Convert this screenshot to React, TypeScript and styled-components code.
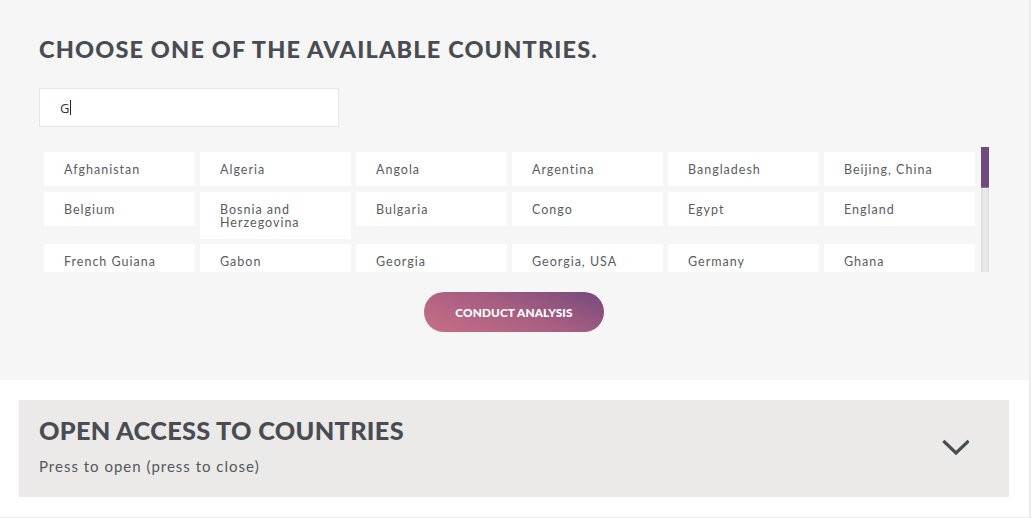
import React from "react";
import styled, { createGlobalStyle } from "styled-components";

const GlobalStyle = createGlobalStyle`
  html, body { margin: 0; padding: 0; }
  body {
    background: #ececec;
    font-family: "Lato", "Noto Sans", sans-serif;
    width: 1031px;
    height: 518px;
    overflow: hidden;
  }
`;

const Page = styled.div`
  width: 1029px;
  height: 517px;
  background: #ffffff;
  display: flex;
  flex-direction: column;
`;

const ChooseSection = styled.section`
  background: #f6f6f6;
  height: 380px;
  box-sizing: border-box;
  padding: 36px 40px 0 39px;
  display: flex;
  flex-direction: column;
`;

const Heading = styled.h1`
  margin: 0;
  font-family: "Lato", sans-serif;
  font-weight: 900;
  font-size: 23.5px;
  line-height: 26px;
  letter-spacing: 1.15px;
  color: #4a4c53;
  text-transform: uppercase;
`;

const SearchBox = styled.div`
  margin-top: 26px;
  width: 300px;
  height: 39px;
  box-sizing: border-box;
  background: #ffffff;
  border: 1px solid #e6e6e6;
  padding: 0 20px;
  display: flex;
  align-items: center;
  font-family: "Open Sans", sans-serif;
  font-size: 13px;
  color: #333;
`;

const Caret = styled.span`
  display: inline-block;
  width: 1px;
  height: 15px;
  background: #222;
  margin-left: 1px;
`;

const ListFrame = styled.div`
  margin-top: 20px;
  width: 950px;
  height: 125px;
  box-sizing: border-box;
  padding: 5px 0 0 5px;
  display: flex;
  gap: 6px;
  overflow: hidden;
`;

const CountryGrid = styled.div`
  display: grid;
  grid-template-columns: repeat(6, 151px);
  column-gap: 5px;
  row-gap: 5.5px;
  align-items: start;
  align-content: start;
`;

const CountryCell = styled.div`
  background: #ffffff;
  padding: 11px 12px 10px 20px;
  font-family: "Lato", sans-serif;
  font-size: 12.5px;
  line-height: 13px;
  letter-spacing: 1px;
  color: #5a5c62;
`;

const ScrollTrack = styled.div`
  width: 8px;
  height: 125px;
  margin-top: -5px;
  background: linear-gradient(to right, #dedede, #ececec 50%, #dedede);
  display: flex;
  flex-direction: column;
  flex-shrink: 0;
`;

const ScrollThumb = styled.div`
  height: 40px;
  background: #6f4a7f;
  border-bottom: 1px solid #8a7a96;
`;

const ButtonRow = styled.div`
  margin-top: 20px;
  display: flex;
  justify-content: center;
  width: 950px;
`;

const AnalysisButton = styled.button`
  width: 180px;
  height: 40px;
  border: none;
  border-radius: 20px;
  background: linear-gradient(20deg, #c86e86 0%, #a95f82 50%, #744a7c 100%);
  color: #ffffff;
  font-family: "Lato", sans-serif;
  font-weight: 900;
  font-size: 11.8px;
  letter-spacing: 0.1px;
  text-transform: uppercase;
  cursor: pointer;
  padding: 0;
`;

const AccessSection = styled.section`
  padding: 20px 20px 20px 19px;
`;

const AccordionHeader = styled.div`
  height: 97px;
  box-sizing: border-box;
  background: #ebeae8;
  padding: 15px 40px 0 20px;
  display: flex;
  align-items: flex-start;
  justify-content: space-between;
  cursor: pointer;
`;

const AccordionText = styled.div`
  display: flex;
  flex-direction: column;
`;

const AccordionTitle = styled.h2`
  margin: 0;
  font-family: "Lato", sans-serif;
  font-weight: 900;
  font-size: 25.3px;
  line-height: 30px;
  letter-spacing: 0.3px;
  color: #4a4c53;
  text-transform: uppercase;
`;

const AccordionHint = styled.p`
  margin: 12px 0 0;
  font-family: "Lato", sans-serif;
  font-size: 15px;
  line-height: 18px;
  letter-spacing: 1px;
  color: #55575c;
`;

const ChevronBox = styled.div`
  margin-top: 24px;
  display: flex;
`;

const Chevron = () => (
  <svg width="28" height="18" viewBox="0 0 28 18">
    <path d="M3.5 3 L15 14 L26.5 3" fill="none" stroke="#4a4c53" strokeWidth="3.2" strokeLinecap="square" />
  </svg>
);

const countries = [
  "Afghanistan", "Algeria", "Angola", "Argentina", "Bangladesh", "Beijing, China",
  "Belgium", "Bosnia and Herzegovina", "Bulgaria", "Congo", "Egypt", "England",
  "French Guiana", "Gabon", "Georgia", "Georgia, USA", "Germany", "Ghana",
];

export default function App() {
  return (
    <>
      <GlobalStyle />
      <Page>
        <ChooseSection>
          <Heading>Choose one of the available countries.</Heading>
          <SearchBox>
            G<Caret />
          </SearchBox>
          <ListFrame>
            <CountryGrid>
              {countries.map((c) => (
                <CountryCell key={c}>{c}</CountryCell>
              ))}
            </CountryGrid>
            <ScrollTrack>
              <ScrollThumb />
            </ScrollTrack>
          </ListFrame>
          <ButtonRow>
            <AnalysisButton>Conduct analysis</AnalysisButton>
          </ButtonRow>
        </ChooseSection>
        <AccessSection>
          <AccordionHeader>
            <AccordionText>
              <AccordionTitle>Open access to countries</AccordionTitle>
              <AccordionHint>Press to open (press to close)</AccordionHint>
            </AccordionText>
            <ChevronBox>
              <Chevron />
            </ChevronBox>
          </AccordionHeader>
        </AccessSection>
      </Page>
    </>
  );
}
